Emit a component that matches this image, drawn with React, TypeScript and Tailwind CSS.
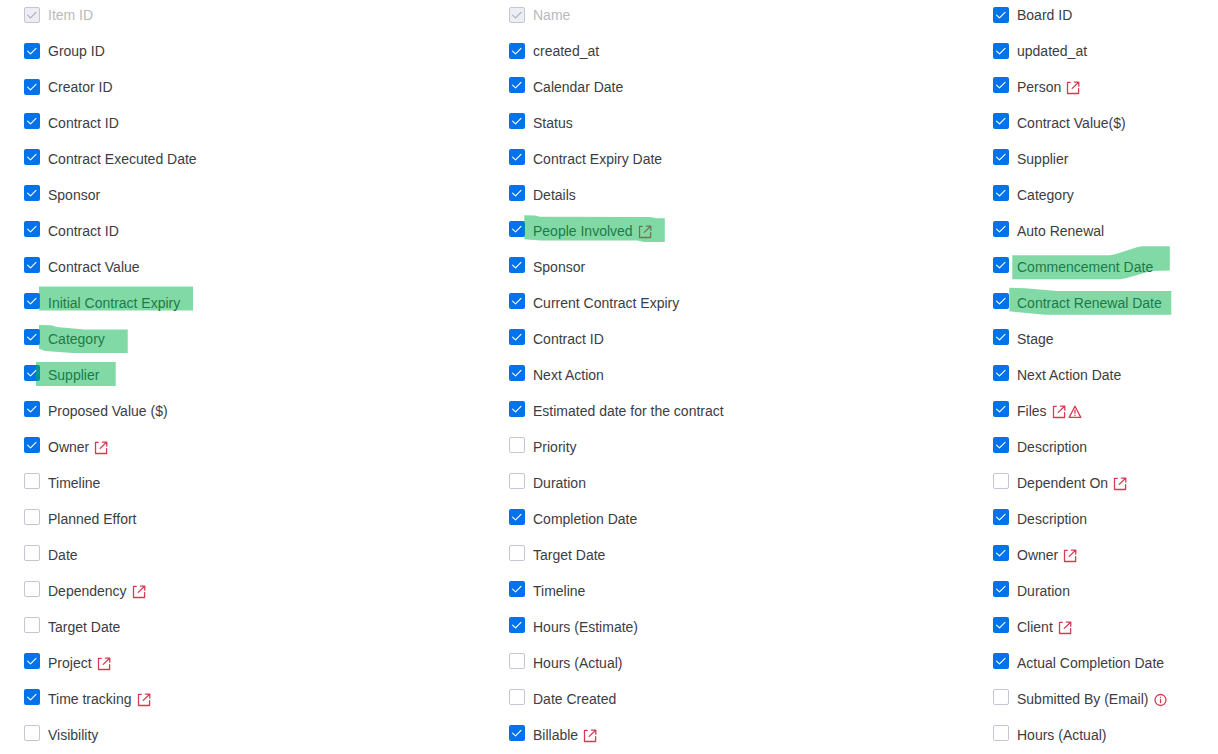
import clsx from 'clsx';

type Mark = 'link' | 'warning' | 'info';

interface Field {
  label: string;
  checked?: boolean;
  disabled?: boolean;
  marks?: Mark[];
}

const on = (label: string, ...marks: Mark[]): Field => ({ label, checked: true, marks });
const off = (label: string, ...marks: Mark[]): Field => ({ label, marks });
const locked = (label: string): Field => ({ label, checked: true, disabled: true });

const columns: Field[][] = [
  [
    locked('Item ID'),
    on('Group ID'),
    on('Creator ID'),
    on('Contract ID'),
    on('Contract Executed Date'),
    on('Sponsor'),
    on('Contract ID'),
    on('Contract Value'),
    on('Initial Contract Expiry'),
    on('Category'),
    on('Supplier'),
    on('Proposed Value ($)'),
    on('Owner', 'link'),
    off('Timeline'),
    off('Planned Effort'),
    off('Date'),
    off('Dependency', 'link'),
    off('Target Date'),
    on('Project', 'link'),
    on('Time tracking', 'link'),
    off('Visibility'),
  ],
  [
    locked('Name'),
    on('created_at'),
    on('Calendar Date'),
    on('Status'),
    on('Contract Expiry Date'),
    on('Details'),
    on('People Involved', 'link'),
    on('Sponsor'),
    on('Current Contract Expiry'),
    on('Contract ID'),
    on('Next Action'),
    on('Estimated date for the contract'),
    off('Priority'),
    off('Duration'),
    on('Completion Date'),
    off('Target Date'),
    on('Timeline'),
    on('Hours (Estimate)'),
    off('Hours (Actual)'),
    off('Date Created'),
    on('Billable', 'link'),
  ],
  [
    on('Board ID'),
    on('updated_at'),
    on('Person', 'link'),
    on('Contract Value($)'),
    on('Supplier'),
    on('Category'),
    on('Auto Renewal'),
    on('Commencement Date'),
    on('Contract Renewal Date'),
    on('Stage'),
    on('Next Action Date'),
    on('Files', 'link', 'warning'),
    on('Description'),
    off('Dependent On', 'link'),
    on('Description'),
    on('Owner', 'link'),
    on('Duration'),
    on('Client', 'link'),
    on('Actual Completion Date'),
    off('Submitted By (Email)', 'info'),
    off('Hours (Actual)'),
  ],
];

// marker strokes drawn over the list
const highlights = [
  '39,286.5 193,286.5 193,310.5 39,310.5',
  '39,325 51,325.3 57,327 84,329.4 127.7,329.4 127.7,353 73,353 45,351 39,348.7',
  '36,362 115.7,362 115.7,386 36,386',
  '524.3,215.3 535,215.5 540,216.8 650,217 657,218.3 664.8,218.3 664.8,242 644,242 637,240.6 541,240.6 524.3,239.2',
  '1012.3,255.3 1110,255.3 1116,254 1137,247.3 1142,246.2 1169.8,246.2 1169.8,270.4 1151,271 1127,278 1120,279.2 1012.3,279.2',
  '1009.3,287.8 1025,288.2 1057,291 1171.3,291 1171.3,314.8 1045,314.8 1009.3,311.3',
];

function MarkIcon({ mark }: { mark: Mark }) {
  return (
    <svg
      className="h-4 w-4 shrink-0"
      viewBox="0 0 16 16"
      fill="none"
      stroke="#d83a52"
      strokeWidth="1.3"
      strokeLinecap="round"
      strokeLinejoin="round"
    >
      {mark === 'link' && (
        <path d="M5.2 2.4H2.5V13.5H13.6V8.6M9.4 2.1H13.8V6.2M13.6 2.3L7.2 8.4" />
      )}
      {mark === 'warning' && (
        <path d="M8 2.2L13.8 13.4H2.2ZM8 6.2V9.2M8 11.2V11.4" />
      )}
      {mark === 'info' && (
        <>
          <circle cx="8.5" cy="8" r="5.5" />
          <path d="M8.5 7.5V10.6M8.5 5.2V5.3" />
        </>
      )}
    </svg>
  );
}

function Checkbox({ checked, disabled }: Pick<Field, 'checked' | 'disabled'>) {
  return (
    <span
      className={clsx(
        'flex h-4 w-4 shrink-0 items-center justify-center rounded-xs',
        disabled && 'border border-[#c3c6d4] bg-[#ecedf5]',
        !disabled && checked && 'bg-[#0073ea]',
        !checked && 'border border-[#c3c6d4] bg-white'
      )}
    >
      {checked && (
        <svg className="h-4 w-4 shrink-0" viewBox="0 0 16 16" fill="none">
          <path
            d="M3.6 8.2L6.5 10.8L12 5.4"
            stroke={disabled ? '#acaeb8' : '#ffffff'}
            strokeWidth="1.1"
            strokeLinecap="round"
            strokeLinejoin="round"
          />
        </svg>
      )}
    </span>
  );
}

function FieldRow({ field, raised }: { field: Field; raised: boolean }) {
  return (
    <label className="flex h-9 items-center gap-2">
      <span className={clsx('flex', raised && 'pb-1')}>
        <Checkbox checked={field.checked} disabled={field.disabled} />
      </span>
      <span className="flex items-center whitespace-nowrap">
        <span className={field.disabled ? 'text-[#b9b9bc]' : 'text-[#3c3d42]'}>{field.label}</span>
        {field.marks && field.marks.length > 0 && (
          <span className="flex pt-0.5 pl-1">
            {field.marks.map((mark) => (
              <MarkIcon key={mark} mark={mark} />
            ))}
          </span>
        )}
      </span>
    </label>
  );
}

export default function App() {
  return (
    <main className="relative h-[754px] w-[1218px] overflow-hidden bg-white font-['Liberation_Sans',Arial,sans-serif] text-sm">
      <div className="-mt-[3px] grid grid-cols-[485px_484px_1fr] pl-6">
        {columns.map((fields, col) => (
          <div key={col} className="flex flex-col">
            {fields.map((field, row) => (
              <FieldRow key={row} field={field} raised={row >= (col === 0 ? 3 : 2)} />
            ))}
          </div>
        ))}
      </div>
      <svg className="pointer-events-none absolute inset-0 h-full w-full" viewBox="0 0 1218 754">
        {highlights.map((points) => (
          <polygon key={points} points={points} fill="#03b34d" fillOpacity="0.5" />
        ))}
      </svg>
    </main>
  );
}
